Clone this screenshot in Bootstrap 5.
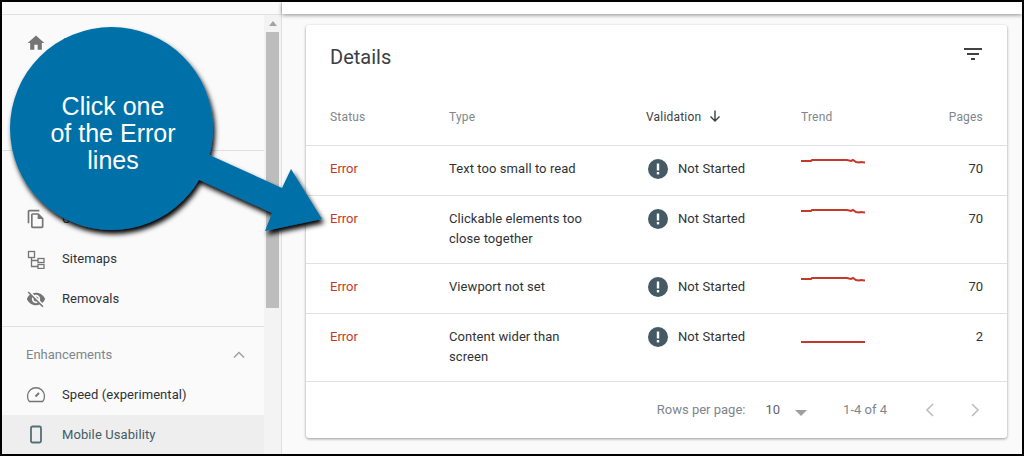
<!doctype html>
<html lang="en"><head><meta charset="utf-8"><title>Details</title>
<link href="https://cdn.jsdelivr.net/npm/bootstrap@5.3.0/dist/css/bootstrap.min.css" rel="stylesheet">
<style>
html,body{margin:0;height:456px;overflow:hidden}
body{font-family:Roboto,"Liberation Sans",sans-serif;background:#000;color:#3c4043}
.frame{position:relative;height:456px;border:2px solid #000;background:#fafafa;overflow:hidden}
.side{width:280px;border-right:1px solid #e0e0e0;flex:none}
.side-top{height:13px;border-bottom:1px solid #e0e0e0}
.side-body{height:439px}
.side-list{width:262px;flex:none;padding-top:8px;overflow:hidden}
.nav-row{height:40px;padding-left:24px;font-size:13px;letter-spacing:.06px;color:#2f3337;gap:16px}
.nav-row svg{width:20px;height:20px;fill:#757575;flex:none}
.nav-row svg.line-ico{fill:none;stroke:#757575;stroke-width:1.3}
.nav-row.on{background:#eeeeee;color:#455a64;letter-spacing:.1px}
.nav-row.on svg{fill:none;stroke:#546e7a}
.sec-sep{margin-top:7px;border-top:1px solid #e0e0e0}
.sec-head{height:48px;padding:8px 19px 0 24px;font-size:13px;color:#80868b}
.scroll-track{flex:1 1 auto;background:#f3f3f3;padding:0 2px}
.scroll-cap{height:17px;color:#a3a3a3}
.scroll-thumb{height:276px;background:#bdbdbd}
.main-area{min-width:0}
.top-strip{height:12px;background:#fff;box-shadow:0 1px 4px rgba(0,0,0,.45)}
.detail-card{margin:11px 15px 0 24px;height:413px;border:0;border-radius:3px;background:#fff;box-shadow:0 1px 3px rgba(0,0,0,.4)}
.card-top{height:64px;padding:0 24px;font-size:20px;color:#3c4043}
.filter-ico{margin:0 1px 6px 0}
.g-table{table-layout:fixed;width:100%;margin:0;font-size:13px;--bs-table-bg:transparent}
.g-table th,.g-table td{padding:0;vertical-align:top;border-bottom:1px solid #e0e0e0;box-shadow:none}
.g-table th{height:56px;font-size:12px;letter-spacing:.2px;font-weight:400;color:#80868b;padding-top:19px}
.g-table td{color:#2f3337;letter-spacing:.07px;line-height:20px;padding-top:13px}
.g-table tr.one td{height:50px}.g-table tr.two td{height:68px}
.g-table .c1{width:143px;padding-left:24px}
.g-table .c2{width:197px}
.g-table .c3{width:155px}
.g-table .c4{width:100px}
.g-table .c5{padding-right:24px;text-align:right}
.g-table td.c1{color:#c5392a;letter-spacing:0}
.g-table th.c3{color:#3c4043}
.g-table td.c5{letter-spacing:0}
.sort-ico{transform:translateY(-2px)}
.type-txt{width:150px}
.alert-ico{width:20px;height:20px;margin:0 10px 0 2px;flex:none}
.spark{display:block;margin-top:-1px;width:64px;height:14px}
.spark-flat{height:20px}
.spark polyline{fill:none;stroke:#c5392a;stroke-width:2}
.foot-row{height:56px;padding-right:27px;font-size:13px;color:#80868b}
.rows-lab{margin-right:20px}
.rows-val{margin-right:15px;color:#5f6368}
.caret-dn{width:0;height:0;border:6px solid transparent;border-top:6px solid #9e9e9e;border-bottom:0;margin-right:36px;margin-top:6px}
.page-ct{margin-right:38px}
.foot-row svg{fill:none;stroke:#bdbdbd;stroke-width:1.6;width:10px;height:14px}
.gap-pg{gap:35px}
.callout{position:absolute;left:-2px;top:-2px;width:1024px;height:456px;pointer-events:none}
.callout-txt{position:absolute;left:9px;top:91px;width:204px;color:#fff;font-family:"Liberation Sans",Arial,sans-serif;font-size:25px;line-height:27px;text-align:center}
</style></head>
<body>
<div class="frame d-flex">
  <aside class="side">
    <div class="side-top"></div>
    <div class="side-body d-flex">
      <div class="side-list">
        <div class="nav-row d-flex align-items-center"><svg viewBox="0 0 24 24"><path d="M10 20v-6h4v6h5v-8h3L12 3 2 12h3v8z"/></svg><span>Overview</span></div>
        <div class="nav-row"></div>
        <div class="nav-row"></div>
        <div class="sec-sep"></div>
        <div class="sec-head"></div>
        <div class="nav-row d-flex align-items-center"><svg viewBox="0 0 24 24"><path d="M16 1H4c-1.1 0-2 .9-2 2v14h2V3h12V1zm-1 4H8c-1.1 0-1.99.9-1.99 2L6 21c0 1.1.89 2 1.99 2H19c1.1 0 2-.9 2-2V11l-6-6zM8 21V7h6v5h5v9H8z"/></svg><span>Coverage</span></div>
        <div class="nav-row d-flex align-items-center"><svg class="line-ico" viewBox="0 0 20 20"><rect x="2.500" y="2.500" width="6" height="6"/><rect x="12" y="9.500" width="6" height="4"/><rect x="12" y="15.500" width="6" height="4"/><path d="M5.500 8.500v9H12M5.500 11.500H12"/></svg><span>Sitemaps</span></div>
        <div class="nav-row d-flex align-items-center"><svg viewBox="0 0 24 24"><path d="M12 7c2.760 0 5 2.240 5 5 0 .65-.13 1.260-.36 1.830l2.920 2.920c1.510-1.260 2.700-2.890 3.430-4.750-1.730-4.390-6-7.500-11-7.500-1.400 0-2.740.25-3.980.7l2.160 2.160C10.740 7.130 11.350 7 12 7zM2 4.270l2.280 2.280.46.46C3.080 8.300 1.780 10.020 1 12c1.730 4.390 6 7.500 11 7.500 1.550 0 3.030-.3 4.380-.84l.42.42L19.730 22 21 20.730 3.270 3 2 4.270zM7.530 9.800l1.550 1.550c-.05.21-.08.43-.08.65 0 1.660 1.340 3 3 3 .22 0 .44-.03.65-.08l1.550 1.550c-.67.33-1.410.53-2.200.53-2.760 0-5-2.240-5-5 0-.79.2-1.530.53-2.200zm4.310-.78l3.150 3.150.02-.16c0-1.660-1.340-3-3-3l-.17.01z"/></svg><span>Removals</span></div>
        <div class="sec-sep"></div>
        <div class="sec-head d-flex align-items-center justify-content-between">Enhancements<svg width="12" height="8" viewBox="0 0 12 8" fill="none" stroke="#9e9e9e" stroke-width="1.400"><path d="M1 6.500l5-5 5 5"/></svg></div>
        <div class="nav-row d-flex align-items-center"><svg class="line-ico" viewBox="0 0 20 20"><path d="M3.300 16.500a8.500 8.500 0 1 1 13.400 0z"/><path d="M9.500 11.500l3.500-3.500" stroke-width="2"/></svg><span>Speed (experimental)</span></div>
        <div class="nav-row on d-flex align-items-center"><svg viewBox="0 0 20 20" stroke-width="1.800"><rect x="5" y="1.500" width="10" height="16" rx="1.500"/></svg><span>Mobile Usability</span></div>
      </div>
      <div class="scroll-track">
        <div class="scroll-cap d-flex justify-content-center align-items-center"><svg width="8" height="5" viewBox="0 0 8 5" fill="currentColor"><path d="M4 0l4 5H0z"/></svg></div>
        <div class="scroll-thumb"></div>
      </div>
    </div>
  </aside>
  <main class="main-area flex-grow-1">
    <div class="top-strip"></div>
    <section class="card detail-card">
      <div class="card-top d-flex align-items-center justify-content-between">
        <span>Details</span>
        <svg class="filter-ico" width="18" height="12" viewBox="0 0 18 12" fill="#424242"><rect width="18" height="2"/><rect x="3" y="5" width="12" height="2"/><rect x="7" y="10" width="4" height="2"/></svg>
      </div>
      <table class="table g-table">
        <thead><tr>
          <th class="c1">Status</th><th class="c2">Type</th>
          <th class="c3">Validation <svg class="ms-1 sort-ico" width="12" height="12" viewBox="0 0 12 12" fill="none" stroke="#3c4043" stroke-width="1.400"><path d="M6 .5v10.500M1.500 6.500L6 11l4.500-4.500"/></svg></th>
          <th class="c4">Trend</th><th class="c5">Pages</th>
        </tr></thead>
        <tbody>
          <tr class="one"><td class="c1">Error</td><td class="c2"><div class="type-txt">Text too small to read</div></td>
            <td class="c3"><div class="d-flex align-items-center"><svg class="alert-ico" viewBox="0 0 20 20"><circle cx="10" cy="10" r="10" fill="#455a64"/><rect x="8.800" y="4.500" width="2.400" height="7" fill="#fff"/><rect x="8.800" y="13" width="2.400" height="2.400" fill="#fff"/></svg>Not Started</div></td>
            <td class="c4"><svg class="spark" viewBox="0 0 64 14"><polyline points="0,3 10,3 11,2 46,2 50,3 52,2 55,4 58,4.500 60,4 64,4.500"/></svg></td><td class="c5">70</td></tr>
          <tr class="two"><td class="c1">Error</td><td class="c2"><div class="type-txt">Clickable elements too close together</div></td>
            <td class="c3"><div class="d-flex align-items-center"><svg class="alert-ico" viewBox="0 0 20 20"><circle cx="10" cy="10" r="10" fill="#455a64"/><rect x="8.800" y="4.500" width="2.400" height="7" fill="#fff"/><rect x="8.800" y="13" width="2.400" height="2.400" fill="#fff"/></svg>Not Started</div></td>
            <td class="c4"><svg class="spark" viewBox="0 0 64 14"><polyline points="0,3 10,3 11,2 46,2 50,3 52,2 55,4 58,4.500 60,4 64,4.500"/></svg></td><td class="c5">70</td></tr>
          <tr class="one"><td class="c1">Error</td><td class="c2"><div class="type-txt">Viewport not set</div></td>
            <td class="c3"><div class="d-flex align-items-center"><svg class="alert-ico" viewBox="0 0 20 20"><circle cx="10" cy="10" r="10" fill="#455a64"/><rect x="8.800" y="4.500" width="2.400" height="7" fill="#fff"/><rect x="8.800" y="13" width="2.400" height="2.400" fill="#fff"/></svg>Not Started</div></td>
            <td class="c4"><svg class="spark" viewBox="0 0 64 14"><polyline points="0,3 10,3 11,2 46,2 50,3 52,2 55,4 58,4.500 60,4 64,4.500"/></svg></td><td class="c5">70</td></tr>
          <tr class="two"><td class="c1">Error</td><td class="c2"><div class="type-txt">Content wider than screen</div></td>
            <td class="c3"><div class="d-flex align-items-center"><svg class="alert-ico" viewBox="0 0 20 20"><circle cx="10" cy="10" r="10" fill="#455a64"/><rect x="8.800" y="4.500" width="2.400" height="7" fill="#fff"/><rect x="8.800" y="13" width="2.400" height="2.400" fill="#fff"/></svg>Not Started</div></td>
            <td class="c4"><svg class="spark spark-flat" viewBox="0 0 64 20"><polyline points="0,16 64,16"/></svg></td><td class="c5">2</td></tr>
        </tbody>
      </table>
      <div class="foot-row d-flex align-items-center justify-content-end">
        <span class="rows-lab">Rows per page:</span><span class="rows-val">10</span><span class="caret-dn"></span>
        <span class="page-ct">1-4 of 4</span>
        <div class="d-flex gap-pg"><svg viewBox="0 0 10 14"><path d="M8 1L2 7l6 6"/></svg><svg viewBox="0 0 10 14"><path d="M2 1l6 6-6 6"/></svg></div>
      </div>
    </section>
  </main>
  <svg class="callout" viewBox="0 0 1024 456">
    <defs><filter id="sh" x="-10%" y="-10%" width="125%" height="125%"><feDropShadow dx="2" dy="4" stdDeviation="2.500" flood-color="#000" flood-opacity="1"/></filter></defs>
    <g fill="#0071a8" filter="url(#sh)">
      <circle cx="111.500" cy="128.500" r="101.500"/>
      <polygon points="205,153 282,188 291,169 322,219 265,231 272,213 195,178"/>
    </g>
  </svg>
  <div class="callout-txt">Click one<br>of the Error<br>lines</div>
</div>
<script src="https://cdn.jsdelivr.net/npm/bootstrap@5.3.0/dist/js/bootstrap.bundle.min.js"></script>
</body></html>
